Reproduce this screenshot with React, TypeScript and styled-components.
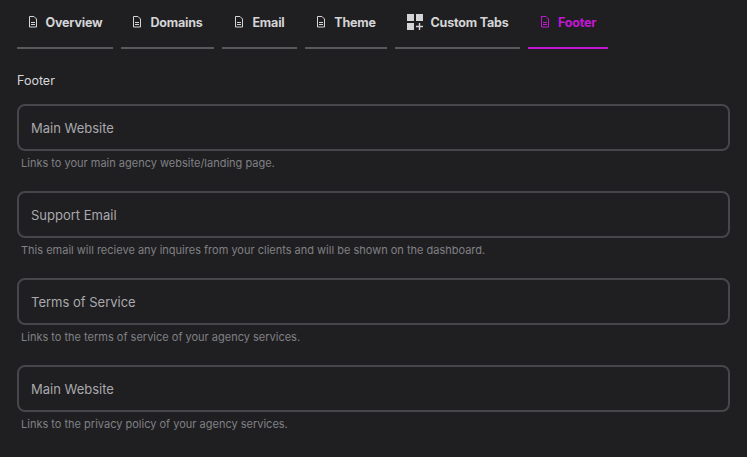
import React from 'react'
import styled, { createGlobalStyle } from 'styled-components'

const Global = createGlobalStyle`
  body { margin: 0; background: #1f1f21; font-family: Inter, "Noto Sans", sans-serif; }
`

const Page = styled.div`
  padding: 0 17px 0 17px;
  height: 457px;
  box-sizing: border-box;
`

const TabBar = styled.div`
  display: flex;
  gap: 8px;
`

const Tab = styled.div<{ $w: number; $active?: boolean }>`
  width: ${(p) => p.$w}px;
  height: 49px;
  box-sizing: border-box;
  display: flex;
  align-items: center;
  justify-content: center;
  gap: 8px;
  padding-bottom: 3px;
  border-bottom: 2px solid ${(p) => (p.$active ? '#c217d4' : '#59595e')};
  color: ${(p) => (p.$active ? '#c217d4' : '#d4d4d6')};
  font-size: 12.5px;
  font-weight: 700;
  letter-spacing: -0.2px;
`

const Title = styled.div`
  color: #d6d6d8;
  font-size: 12.5px;
  margin: 24px 0 16px;
`

const Field = styled.div`
  margin-bottom: 21px;
`

const Input = styled.div`
  height: 47px;
  box-sizing: border-box;
  border: 2px solid #46464b;
  border-radius: 8px;
  display: flex;
  align-items: center;
  padding: 0 12px;
  color: #a9a9ad;
  font-size: 13px;
`

const Help = styled.div`
  color: #808085;
  font-size: 11px;
  margin: 5px 0 0 4px;
`

const DocIcon = ({ c }: { c: string }) => (
  <svg width="10" height="12" viewBox="0 0 10 12" fill="none" stroke={c} strokeWidth="1">
    <path d="M1.5 .5h4.5l2.5 2.5v8h-7z" />
    <path d="M3 6.5h4M3 8.5h4" />
  </svg>
)

const GridIcon = () => (
  <svg width="16" height="16" viewBox="0 0 16 16" fill="#d4d4d6">
    <rect x="0" y="0" width="7" height="7" />
    <rect x="9" y="0" width="7" height="7" />
    <rect x="0" y="9" width="7" height="7" />
    <path d="M11.8 9h1.4v2.8H16v1.4h-2.8V16h-1.4v-2.8H9v-1.4h2.8z" />
  </svg>
)

const tabs = [
  { label: 'Overview', w: 96 },
  { label: 'Domains', w: 93 },
  { label: 'Email', w: 75 },
  { label: 'Theme', w: 82 },
  { label: 'Custom Tabs', w: 125, grid: true },
  { label: 'Footer', w: 80, active: true },
]

const fields = [
  ['Main Website', 'Links to your main agency website/landing page.'],
  ['Support Email', 'This email will recieve any inquires from your clients and will be shown on the dashboard.'],
  ['Terms of Service', 'Links to the terms of service of your agency services.'],
  ['Main Website', 'Links to the privacy policy of your agency services.'],
]

export default function App() {
  return (
    <Page>
      <Global />
      <TabBar>
        {tabs.map((t) => (
          <Tab key={t.label} $w={t.w} $active={t.active}>
            {t.grid ? <GridIcon /> : <DocIcon c={t.active ? '#c217d4' : '#d4d4d6'} />}
            {t.label}
          </Tab>
        ))}
      </TabBar>
      <Title>Footer</Title>
      {fields.map(([label, help], i) => (
        <Field key={i}>
          <Input>{label}</Input>
          <Help>{help}</Help>
        </Field>
      ))}
    </Page>
  )
}
